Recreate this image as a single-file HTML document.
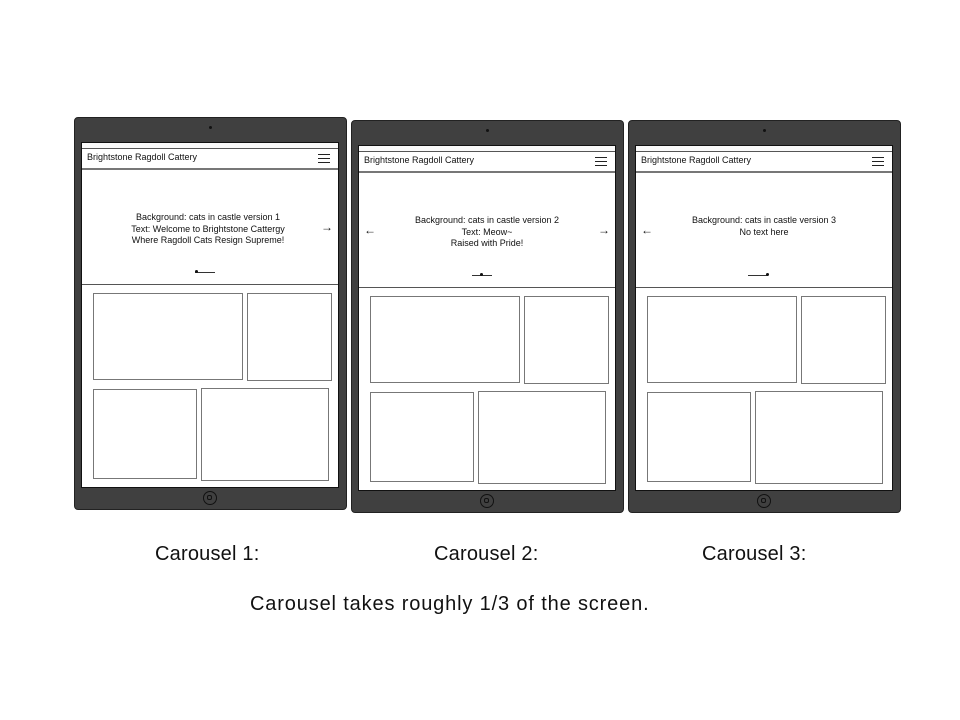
<!DOCTYPE html>
<html><head><meta charset="utf-8"><style>
body{margin:0;width:960px;height:720px;background:#fff;position:relative;overflow:hidden;font-family:"Liberation Sans",sans-serif}
.t{position:absolute;width:273px;height:393px;background:#404040;border:1px solid #222;border-radius:4px;box-sizing:border-box}
.cam{position:absolute;left:134px;top:8px;width:3px;height:3px;border-radius:50%;background:#111}
.s{position:absolute;left:6px;top:24px;width:258px;height:346px;background:#fff;border:1px solid #111;box-sizing:border-box;overflow:hidden}
.sb{position:absolute;left:0;top:0;width:100%;height:6px;border-bottom:1px solid #555;box-sizing:border-box;background:#fafafa}
.hd{position:absolute;left:5px;top:9px;font-size:9px;color:#111}
.hm{position:absolute;right:8px;top:11px;width:12px;height:9px;border-top:1.5px solid #222;border-bottom:1.5px solid #222;box-sizing:border-box}
.hm:after{content:"";position:absolute;left:0;top:2.5px;width:12px;border-top:1.5px solid #222}
.l1{position:absolute;left:0;top:25px;width:100%;height:2px;background:#777}
.l2{position:absolute;left:0;top:141px;width:100%;height:1px;background:#555}
.ct{position:absolute;left:0;width:100%;text-align:center;font-size:9px;line-height:11.5px;color:#111}
.ar{position:absolute;font-size:12px;color:#111;top:77px}
.dl{position:absolute;top:129px;width:20px;border-top:1px solid #333}
.dt{position:absolute;top:127px;width:3px;height:3px;border-radius:50%;background:#111}
.b{position:absolute;border:1px solid #777;box-sizing:border-box}
.hb{position:absolute;left:128px;top:373px;width:14px;height:14px;border-radius:50%;border:1.5px solid #111;box-sizing:border-box}
.hb:after{content:"";position:absolute;left:3px;top:3px;width:5px;height:5px;border:1.3px solid #111;border-radius:2px;box-sizing:border-box}
.cap{position:absolute;font-family:"Liberation Sans",sans-serif;font-size:20px;color:#111}
</style></head><body>

<div class="t" style="left:74px;top:117px">
<div class="cam"></div>
<div class="s"><div class="sb"></div><div class="hd">Brightstone Ragdoll Cattery</div><div class="hm"></div><div class="l1"></div>
<div class="ct" style="top:69px;left:-2px">Background: cats in castle version 1<br>Text: Welcome to Brightstone Cattergy<br>Where Ragdoll Cats Resign Supreme!</div>
<div class="ar" style="left:239px">→</div>
<div class="dl" style="left:113px"></div><div class="dt" style="left:113px"></div>
<div class="l2"></div>
<div class="b" style="left:11px;top:150px;width:150px;height:87px"></div>
<div class="b" style="left:165px;top:150px;width:85px;height:88px"></div>
<div class="b" style="left:11px;top:246px;width:104px;height:90px"></div>
<div class="b" style="left:119px;top:245px;width:128px;height:93px"></div>
</div>
<div class="hb"></div>
</div>

<div class="t" style="left:351px;top:120px">
<div class="cam"></div>
<div class="s"><div class="sb"></div><div class="hd">Brightstone Ragdoll Cattery</div><div class="hm"></div><div class="l1"></div>
<div class="ct" style="top:69px">Background: cats in castle version 2<br>Text: Meow~<br>Raised with Pride!</div>
<div class="ar" style="left:5px">←</div><div class="ar" style="left:239px">→</div>
<div class="dl" style="left:113px"></div><div class="dt" style="left:121px"></div>
<div class="l2"></div>
<div class="b" style="left:11px;top:150px;width:150px;height:87px"></div>
<div class="b" style="left:165px;top:150px;width:85px;height:88px"></div>
<div class="b" style="left:11px;top:246px;width:104px;height:90px"></div>
<div class="b" style="left:119px;top:245px;width:128px;height:93px"></div>
</div>
<div class="hb"></div>
</div>

<div class="t" style="left:628px;top:120px">
<div class="cam"></div>
<div class="s"><div class="sb"></div><div class="hd">Brightstone Ragdoll Cattery</div><div class="hm"></div><div class="l1"></div>
<div class="ct" style="top:69px">Background: cats in castle version 3<br>No text here</div>
<div class="ar" style="left:5px">←</div>
<div class="dl" style="left:112px"></div><div class="dt" style="left:130px"></div>
<div class="l2"></div>
<div class="b" style="left:11px;top:150px;width:150px;height:87px"></div>
<div class="b" style="left:165px;top:150px;width:85px;height:88px"></div>
<div class="b" style="left:11px;top:246px;width:104px;height:90px"></div>
<div class="b" style="left:119px;top:245px;width:128px;height:93px"></div>
</div>
<div class="hb"></div>
</div>

<div class="cap" style="left:155px;top:543px;letter-spacing:0.2px">Carousel 1:</div>
<div class="cap" style="left:434px;top:543px;letter-spacing:0.2px">Carousel 2:</div>
<div class="cap" style="left:702px;top:543px;letter-spacing:0.2px">Carousel 3:</div>
<div class="cap" style="left:250px;top:593px;letter-spacing:0.85px">Carousel takes roughly 1/3 of the screen.</div>
</body></html>
